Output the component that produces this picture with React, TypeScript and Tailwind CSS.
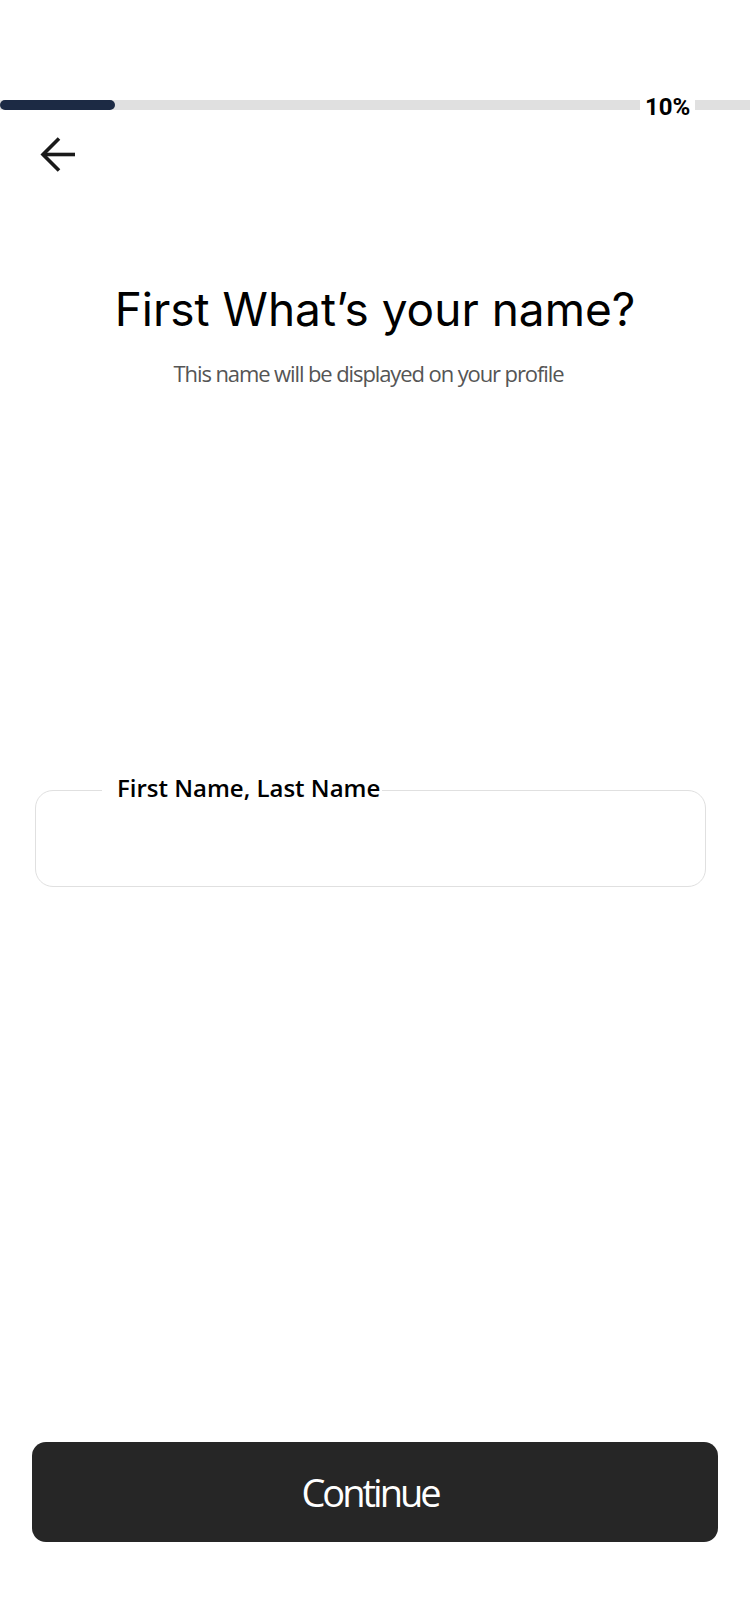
import { useState } from 'react';

export default function App() {
	const [name, setName] = useState('');
	const progress = 18;

	return (
		<div className="flex flex-col min-h-[1624px] w-[750px] bg-white font-['Open_Sans',sans-serif]">
			{/* progress */}
			<div className="flex items-center h-[10px] mt-[100px]">
				<div className="w-[640px] h-[10px] bg-[#e0e0e0]">
					<div className="h-full rounded-full bg-[#1c2a44]" style={{ width: `${progress}%` }} />
				</div>
				<span className="px-[5px] pt-[3px] text-[24px] leading-none font-bold text-black font-['Roboto',sans-serif]">
					10%
				</span>
				<div className="flex-1 h-[10px] bg-[#e0e0e0]" />
			</div>

			{/* back */}
			<button className="ml-[40px] mt-[27px] w-[36px] h-[36px] flex items-center justify-center">
				<svg width="36" height="36" viewBox="0 0 36 36" fill="none" stroke="#1a1a1a" strokeWidth="3.6">
					<path d="M3 17.5H35" />
					<path d="M19 1.5L3 17.5L19 33.5" />
				</svg>
			</button>

			<h1 className="mt-[110px] text-center text-[46px] leading-[52px] font-normal text-black font-['Inter',sans-serif]">
				First What’s your name?
			</h1>
			<p className="mt-[23px] pr-[13px] text-center text-[22px] leading-[30px] text-[#555555] tracking-[-1.1px]">
				This name will be displayed on your profile
			</p>

			{/* input */}
			<div className="relative ml-[35px] mr-[44px] mt-[402px] h-[97px] rounded-[18px] border-[1.5px] border-[#e0e0e0]">
				<label className="absolute -top-[19px] left-[66px] pl-[15px] pr-[2px] bg-white text-[24px] leading-[32px] font-semibold text-black">
					First Name, Last Name
				</label>
				<input
					type="text"
					value={name}
					onChange={(e) => setName(e.target.value)}
					className="w-full h-full px-[30px] pt-[10px] bg-transparent rounded-[18px] text-[22px] text-black outline-none"
				/>
			</div>

			<div className="mt-auto px-[32px] pb-[82px]">
				<button className="w-full h-[100px] pr-[10px] rounded-[14px] bg-[#262626] text-white text-[38px] tracking-[-3px]">
					Continue
				</button>
			</div>
		</div>
	);
}
